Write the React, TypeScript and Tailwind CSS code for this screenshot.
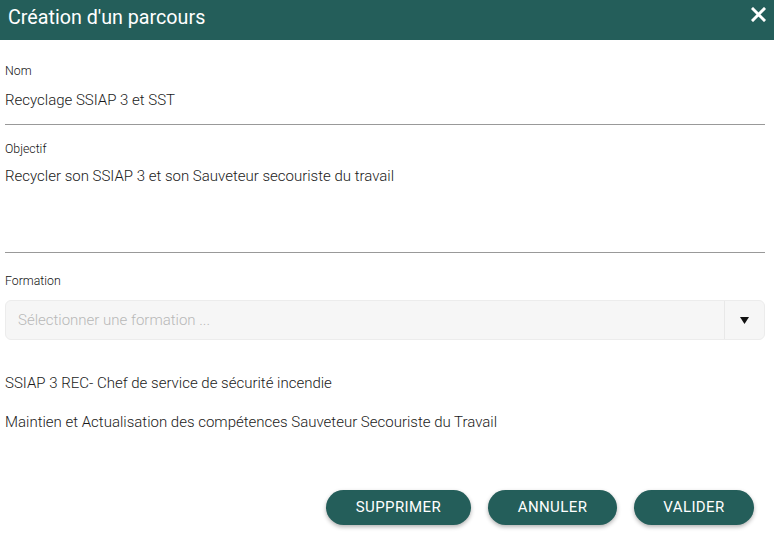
import React from "react";

export default function App() {
  const txt = "text-[15px] leading-[18px] font-light text-[#1a1a1a]";
  const lbl = "text-[12.3px] leading-[14px] font-light text-[#111]";
  const btn = "h-[35px] rounded-full bg-[#245e5a] text-white text-[15px] tracking-[0.4px] shadow-[0_2px_4px_rgba(0,0,0,0.3)]";
  return (
    <div className="w-[774px] h-[540px] bg-white overflow-hidden" style={{ fontFamily: "Roboto, 'Liberation Sans', sans-serif" }}>
      <div className="h-[40px] bg-[#245e5a] flex items-center justify-between pl-[8px] pr-[8px]">
        <div className="text-white text-[19.7px] leading-none mb-[4px]">Création d'un parcours</div>
        <svg width="15" height="15" viewBox="0 0 15 15" className="mb-[12px]">
          <path d="M2 2 L13 13 M13 2 L2 13" stroke="white" strokeWidth="3" strokeLinecap="square" />
        </svg>
      </div>
      <div className="pl-[5px] pr-[9px]">
        <div className={`pt-[24px] ${lbl}`}>Nom</div>
        <div className={`mt-[13px] ${txt}`}>Recyclage SSIAP 3 et SST</div>
        <div className="mt-[15px] h-px bg-[#999]" />
        <div className={`mt-[17px] ${lbl}`}>Objectif</div>
        <div className={`mt-[11px] h-[68px] ${txt}`}>Recycler son SSIAP 3 et son Sauveteur secouriste du travail</div>
        <div className="mt-[17px] h-px bg-[#999]" />
        <div className={`mt-[21px] ${lbl}`}>Formation</div>
        <div className="mt-[12px] h-[40px] rounded-[6px] bg-[#f6f6f6] border border-[#ececec] flex items-center">
          <div className="flex-1 pl-[12px] text-[15px] font-light text-[#b8b8b8]">Sélectionner une formation ...</div>
          <div className="w-[40px] h-full border-l border-[#e8e8e8] flex items-center justify-center">
            <svg width="9" height="7" viewBox="0 0 9 7"><path d="M0 0 H9 L4.5 7 Z" fill="#111" /></svg>
          </div>
        </div>
        <div className={`mt-[34px] ${txt}`}>SSIAP 3 REC- Chef de service de sécurité incendie</div>
        <div className={`mt-[21px] ${txt}`}>Maintien et Actualisation des compétences Sauveteur Secouriste du Travail</div>
      </div>
      <div className="mt-[59px] flex justify-end gap-[17px] pr-[20px]">
        <button className={`${btn} w-[145px]`}>SUPPRIMER</button>
        <button className={`${btn} w-[129px]`}>ANNULER</button>
        <button className={`${btn} w-[120px]`}>VALIDER</button>
      </div>
    </div>
  );
}
